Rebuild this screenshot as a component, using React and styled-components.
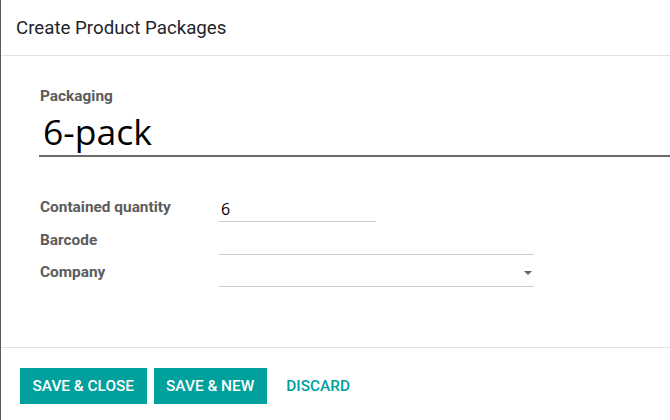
import styled, { createGlobalStyle } from "styled-components";

const GlobalStyle = createGlobalStyle`
  html, body {
    margin: 0;
    padding: 0;
    background: #ffffff;
  }
  body {
    font-family: Roboto, "Liberation Sans", sans-serif;
  }
`;

const Dialog = styled.div`
  width: 670px;
  height: 420px;
  box-sizing: border-box;
  border-left: 1px solid #5a5a5a;
  display: flex;
  flex-direction: column;
  overflow: hidden;
  background: #ffffff;
`;

const Header = styled.header`
  height: 55px;
  flex-shrink: 0;
  display: flex;
  align-items: center;
  padding: 0 15px;
  border-bottom: 1px solid #dee2e6;
`;

const Title = styled.h4`
  margin: 0;
  font-size: 18.7px;
  font-weight: 400;
  color: #212529;
`;

const Body = styled.div`
  flex: 1;
  padding: 30px 0 0 38px;
`;

const Label = styled.label`
  display: block;
  font-size: 15.4px;
  line-height: 20px;
  font-weight: 700;
  color: #5c5c5c;
  padding-left: ${(p) => (p.$inset ? "1px" : "0")};
`;

const NameInput = styled.input`
  display: block;
  box-sizing: border-box;
  width: calc(100% + 20px);
  height: 51px;
  margin: 0;
  padding: 0 0 0 4px;
  border: none;
  border-bottom: 2px solid #6b6b6b;
  outline: none;
  font-family: "Open Sans", sans-serif;
  font-size: 35.5px;
  color: #000000;
  background: transparent;
`;

const Fields = styled.div`
  display: grid;
  grid-template-columns: 180px auto;
  grid-auto-rows: 25px;
  row-gap: 7.5px;
  margin-top: 40px;
  align-items: start;
`;

const FieldWrap = styled.div`
  position: relative;
  width: ${(p) => p.$width}px;
  height: 25px;
  box-sizing: border-box;
  border-bottom: 1px solid #cccccc;
`;

const FieldInput = styled.input`
  box-sizing: border-box;
  width: 100%;
  height: 24px;
  margin: 0;
  padding: 0 2px;
  border: none;
  outline: none;
  font-family: "Open Sans", sans-serif;
  font-size: 16px;
  color: #000000;
  background: transparent;
`;

const Caret = styled.span`
  position: absolute;
  right: 2px;
  top: 9px;
  width: 0;
  height: 0;
  border-left: 4px solid transparent;
  border-right: 4px solid transparent;
  border-top: 4px solid #666666;
`;

const Footer = styled.footer`
  flex-shrink: 0;
  height: 73px;
  box-sizing: border-box;
  border-top: 1px solid #dee2e6;
  display: flex;
  align-items: flex-start;
  gap: 7px;
  padding: 20px 0 0 19px;
`;

const Button = styled.button`
  height: 36px;
  padding: 0 12.5px;
  border: none;
  border-radius: 0;
  font-family: Roboto, sans-serif;
  font-size: 15.4px;
  font-weight: 500;
  text-transform: uppercase;
  cursor: pointer;
  background: ${(p) => (p.$primary ? "#00a09d" : "transparent")};
  color: ${(p) => (p.$primary ? "#ffffff" : "#00a09d")};
`;

const App = () => {
  return (
    <>
      <GlobalStyle />
      <Dialog>
        <Header>
          <Title>Create Product Packages</Title>
        </Header>
        <Body>
          <Label $inset>Packaging</Label>
          <NameInput defaultValue="6-pack" />
          <Fields>
            <Label $inset>Contained quantity</Label>
            <FieldWrap $width={157}>
              <FieldInput defaultValue="6" />
            </FieldWrap>
            <Label $inset>Barcode</Label>
            <FieldWrap $width={315}>
              <FieldInput />
            </FieldWrap>
            <Label $inset>Company</Label>
            <FieldWrap $width={315}>
              <FieldInput />
              <Caret />
            </FieldWrap>
          </Fields>
        </Body>
        <Footer>
          <Button $primary>Save &amp; Close</Button>
          <Button $primary>Save &amp; New</Button>
          <Button>Discard</Button>
        </Footer>
      </Dialog>
    </>
  );
};

export default App;
